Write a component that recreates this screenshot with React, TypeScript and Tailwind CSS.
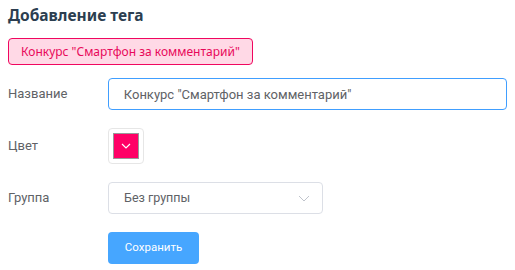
import React, { useState } from 'react';

const App: React.FC = () => {
  const [name, setName] = useState('Конкурс "Смартфон за комментарий"');

  return (
    <div className="min-h-screen bg-white px-2 pt-[5px] font-['Roboto',sans-serif] text-[#606266]">
      <h3 className="text-[15.5px] font-bold leading-5 text-[#2c3e50] font-['Noto_Sans',sans-serif]">Добавление тега</h3>

      <div className="mt-[13px] inline-flex h-[27px] items-center rounded border border-[#f0065f] bg-[#ffd9e6] px-3 text-[12px] text-[#e8085a] font-['Noto_Sans',sans-serif]">
        {name}
      </div>

      <div className="mt-[13px] flex flex-col gap-[18px]">
        <div className="flex items-center">
          <label className="w-[100px] text-[13px]">Название</label>
          <input
            value={name}
            onChange={(e) => setName(e.target.value)}
            className="h-8 w-[400px] rounded border border-[#409eff] px-[15px] text-[13px] text-[#606266] outline-none"
          />
        </div>

        <div className="flex items-center">
          <label className="w-[100px] text-[13px]">Цвет</label>
          <div className="flex h-9 w-9 items-center justify-center rounded border border-[#e6e6e6]">
            <div className="flex h-[26px] w-[26px] items-center justify-center border border-[#999] bg-[#ff0066]">
              <svg width="10" height="6" viewBox="0 0 10 6" fill="none">
                <path d="M1 1l4 4 4-4" stroke="white" strokeWidth="1.2" />
              </svg>
            </div>
          </div>
        </div>

        <div className="flex items-center">
          <label className="w-[100px] text-[13px]">Группа</label>
          <div className="flex h-8 w-[215px] items-center justify-between rounded border border-[#dcdfe6] px-[15px] text-[12.5px]">
            <span>Без группы</span>
            <svg width="12" height="7" viewBox="0 0 12 7" fill="none" className="mr-[-3px]">
              <path d="M1 1l5 5 5-5" stroke="#c0c4cc" strokeWidth="1" />
            </svg>
          </div>
        </div>

        <div className="flex">
          <div className="w-[100px]" />
          <button className="h-8 w-[91px] rounded bg-[#46a6ff] text-[11.5px] text-white">Сохранить</button>
        </div>
      </div>
    </div>
  );
};

export default App;
